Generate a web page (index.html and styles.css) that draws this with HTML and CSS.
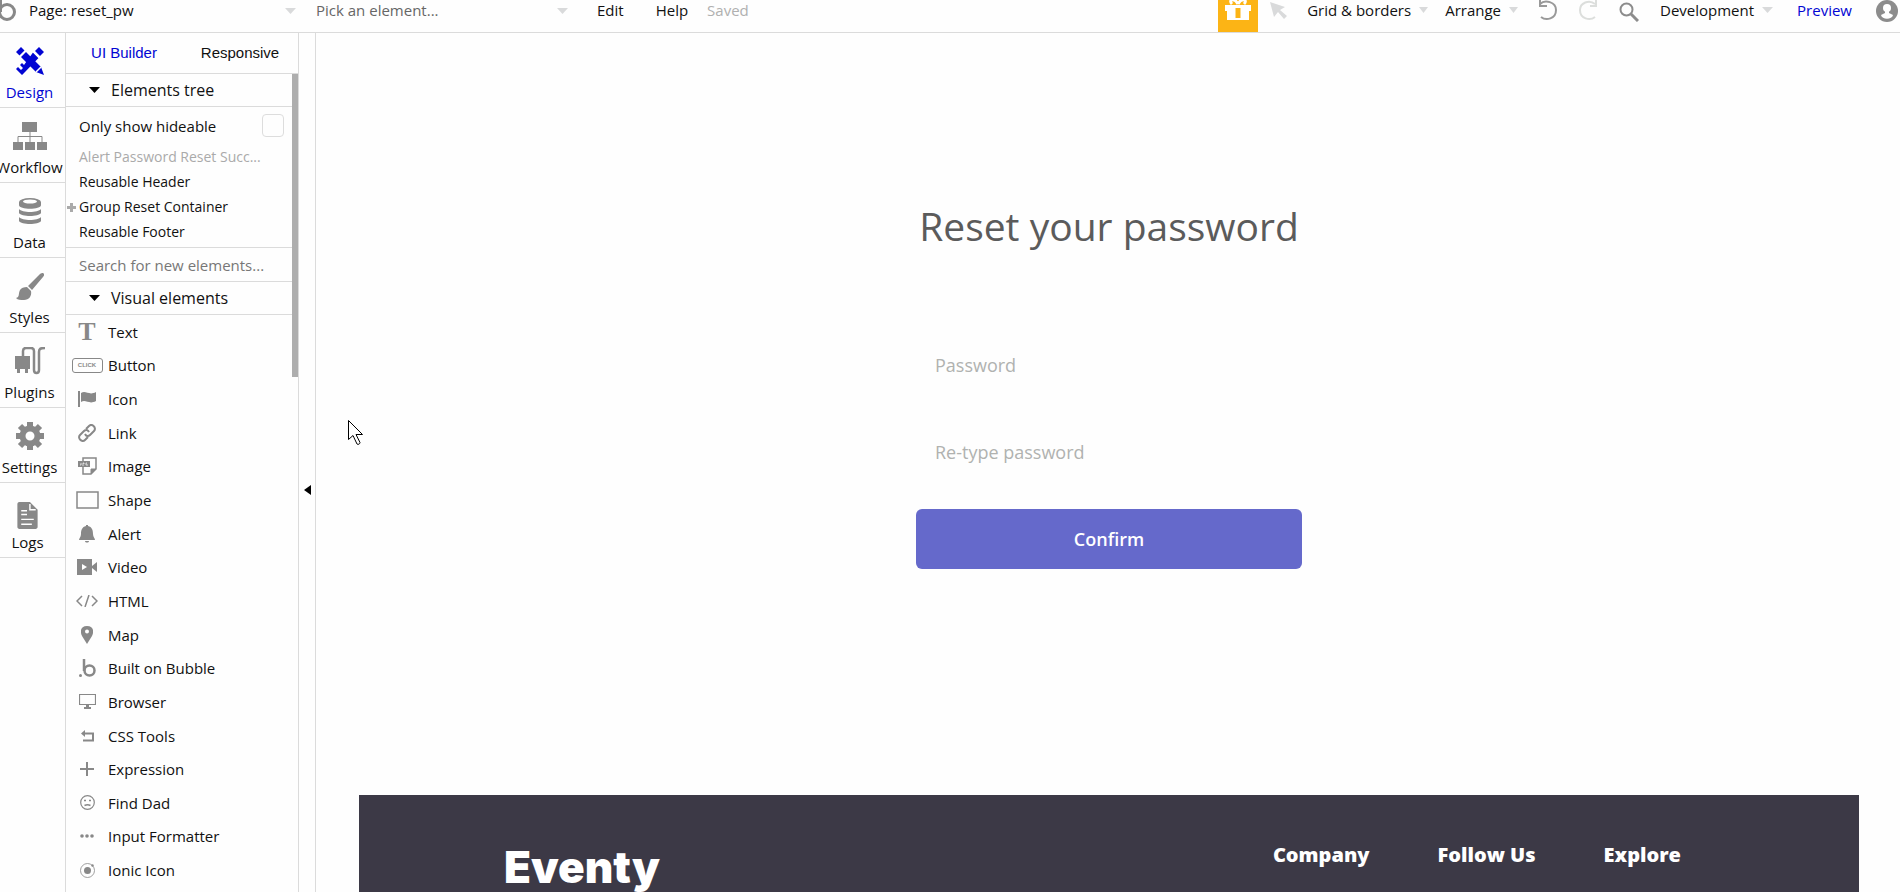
FILE: index.html
```html
<!DOCTYPE html>
<html lang="en">
<head>
    <meta charset="UTF-8">
    <meta name="viewport" content="width=device-width, initial-scale=1.0">
    <title>reset_pw - Editor</title>
    <link rel="stylesheet" href="styles.css">
</head>
<body>
    <header class="topbar">
        <svg class="logo" width="16" height="22" viewBox="0 0 16 22" fill="none" stroke="#888" stroke-width="3"><circle cx="7" cy="12" r="7.5"/><path d="M.5 0v12"/></svg>
        <div class="picker page-picker">
            <select aria-label="Page"><option>Page: reset_pw</option></select>
            <svg class="caret" width="11" height="6" viewBox="0 0 11 6"><path d="M0 0h11L5.500 6z" fill="#d9dadb"/></svg>
        </div>
        <div class="picker element-picker">
            <select aria-label="Element"><option>Pick an element...</option></select>
            <svg class="caret" width="11" height="6" viewBox="0 0 11 6"><path d="M0 0h11L5.500 6z" fill="#d9dadb"/></svg>
        </div>
        <nav class="menus">
            <button>Edit</button>
            <button>Help</button>
        </nav>
        <span class="saved">Saved</span>

        <div class="tools">
            <button class="gift" aria-label="Gift">
                <svg width="28" height="22" viewBox="0 0 28 22"><path d="M1 5h26v6H1zM3 11h22v9H3z" fill="#fff"/><path d="M11.500 8h5v10h-5z" fill="#fcb415"/><path d="M14 4C10-3 4 0 8 4M14 4c4-7 10-4 6 0" fill="none" stroke="#fff" stroke-width="3"/></svg>
            </button>
            <button aria-label="Select">
                <svg width="18" height="20" viewBox="0 0 18 20"><path d="M0 2l15 5-5 3 7 6-3 3-6-7-4 5z" fill="#d9dadb"/></svg>
            </button>
            <div class="menus-right">
                <button>Grid &amp; borders <svg class="caret" width="9" height="6" viewBox="0 0 9 6"><path d="M0 0h9L4.500 6z" fill="#d9dadb"/></svg></button>
                <button>Arrange <svg class="caret" width="9" height="6" viewBox="0 0 9 6"><path d="M0 0h9L4.500 6z" fill="#d9dadb"/></svg></button>
            </div>
            <div class="history">
                <button aria-label="Undo"><svg width="20" height="22" viewBox="0 0 20 22" fill="none" stroke="#999" stroke-width="2"><path d="M2 4c5-5 16-2 16 6 0 9-10 11-15 7M2 0v6h7"/></svg></button>
                <button aria-label="Redo"><svg width="19" height="22" viewBox="0 0 19 22" fill="none" stroke="#dcdedc" stroke-width="2"><path d="M16 4C10-1 1 3 1 10c0 9 10 11 15 7M17 0v6h-6"/></svg></button>
                <button aria-label="Search"><svg width="20" height="22" viewBox="0 0 20 22" fill="none" stroke="#8c8c8c"><circle cx="7.500" cy="9.500" r="6" stroke-width="2"/><path d="M12 14l7 7" stroke-width="3"/></svg></button>
            </div>
            <button class="version">Development <svg class="caret" width="11" height="6" viewBox="0 0 11 6"><path d="M0 0h11L5.500 6z" fill="#d9dadb"/></svg></button>
            <a class="preview" href="#">Preview</a>
            <button aria-label="Account">
                <svg width="22" height="22" viewBox="0 0 22 22"><circle cx="11" cy="11" r="11" fill="#8c8c8c"/><circle cx="11" cy="8" r="4" fill="#fff"/><path d="M9 10h4v3l4 2c-1 5-11 5-12 0l4-2z" fill="#fff"/></svg>
            </button>
        </div>
    </header>

    <div class="editor">
        <nav class="rail">
            <a class="active" href="#">
                <svg width="28" height="28" viewBox="0 0 28 28"><g fill="#0205d3"><path d="M0 5l5-5 4 4-5 5zM19 4l4-4 5 5-4 4zM5 10l5-5 15 15 3 8-8-3z"/><path d="M17 5.500l5.500 5.500L9 25l-3 3-6-6 2-2 3 3 2-2-3-3 2-2 2 2z"/></g><path d="M3 10l7-7M16.500 4l7.500 7.500M20 25l5-5" stroke="#fff" stroke-width="1.500"/></svg>
                Design
            </a>
            <a href="#">
                <svg width="34" height="28" viewBox="0 0 34 28" fill="#888"><path d="M9 0h15v10H9zM0 20h10v8H0zM12 20h10v8H12zM24 20h10v8H24z"/><path d="M17 10v10M5 20v-5.500h24V20" fill="none" stroke="#888"/></svg>
                Workflow
            </a>
            <a href="#">
                <svg width="22" height="28" viewBox="0 0 22 28" fill="#888"><path d="M0 5v3c0 5 22 5 22 0V5z"/><ellipse cx="11" cy="5" rx="11" ry="4"/><ellipse cx="11" cy="4.500" rx="7" ry="2" fill="#fff"/><path d="M0 12c3 4 19 4 22 0v4c-2 4-20 4-22 0zM0 20c3 4 19 4 22 0v4c-2 4-20 4-22 0z"/></svg>
                Data
            </a>
            <a href="#">
                <svg width="28" height="28" viewBox="0 0 28 28" fill="#888"><path d="M27 1c2 1 1 3 0 4L16 18l-4-4L24 2c1-1 2-1 3-1z"/><path d="M11 15l4 4c1 5-2 9-7 9-4 0-6 0-8-2 4-1 2-4 4-8 1-2 4-3 7-3z"/></svg>
                Styles
            </a>
            <a href="#">
                <svg width="30" height="28" viewBox="0 0 30 28"><path d="M0 9h15v13H0zM2 21h3v5H2zM10 21h3v5h-3z" fill="#888"/><path d="M8 9V4c0-2 1-3 3-3h5c2 0 3 1 3 3v19c0 4 5 4 5 0V5c0-3 1-4 6-4" fill="none" stroke="#888" stroke-width="2.500"/></svg>
                Plugins
            </a>
            <a href="#">
                <svg width="28" height="28" viewBox="0 0 28 28" fill="none" stroke="#888"><circle cx="14" cy="14" r="7.500" stroke-width="6"/><path d="M14 0v5M14 23v5M0 14h5M23 14h5M4 4l4 4M20 20l4 4M4 24l4-4M20 8l4-4" stroke-width="6"/></svg>
                Settings
            </a>
            <a class="logs" href="#">
                <svg width="21" height="27" viewBox="0 0 21 28"><path d="M2 0h11l8 8v18c0 1-1 2-2 2H2c-1 0-2-1-2-2V2c0-1 1-2 2-2z" fill="#888"/><path d="M13 2v6h6M4 13h6M4 18h13M4 23h11M4 9h6" fill="none" stroke="#fff" stroke-width="1.500"/></svg>
                Logs
            </a>
        </nav>

        <aside class="panel">
            <div class="tabs">
                <button class="active">UI Builder</button>
                <button>Responsive</button>
            </div>
            <div class="panel-body">
                <button class="section">
                    <svg width="11" height="6" viewBox="0 0 11 6"><path d="M0 0h11L5.500 6z"/></svg>
                    Elements tree
                </button>
                <div class="tree">
                    <div class="hideable">
                        <label for="hideable">Only show hideable</label>
                        <input type="checkbox" id="hideable">
                    </div>
                    <ul>
                        <li class="hidden">Alert Password Reset Succ...</li>
                        <li>Reusable Header</li>
                        <li><svg class="plus" width="9" height="9" viewBox="0 0 9 9"><path d="M0 4.500h9M4.500 0v9" stroke="#aaa" stroke-width="3"/></svg>Group Reset Container</li>
                        <li>Reusable Footer</li>
                    </ul>
                </div>
                <input class="search" type="text" placeholder="Search for new elements..." aria-label="Search for new elements">
                <button class="section">
                    <svg width="11" height="6" viewBox="0 0 11 6"><path d="M0 0h11L5.500 6z"/></svg>
                    Visual elements
                </button>
                <span class="scrollbar"></span>
            </div>
            <ul class="palette">
                <li><span class="icon icon-text">T</span>Text</li>
                <li><span class="icon"><span class="icon-button">CLICK</span></span>Button</li>
                <li><span class="icon"><svg width="18" height="16" viewBox="0 0 18 16" fill="#888"><path d="M0 0h2v16H0zM3 2c5-3 8 3 15-1v9c-7 4-10-2-15 1z"/></svg></span>Icon</li>
                <li><span class="icon"><svg width="18" height="18" viewBox="0 0 18 18" fill="none" stroke="#888" stroke-width="2"><path d="M8 5l3-3c3-3 8 2 5 5l-4 4c-2 2-4 1-5-1M10 13l-3 3c-3 3-8-2-5-5l4-4c2-2 4-1 5 1"/></svg></span>Link</li>
                <li><span class="icon"><svg width="19" height="18" viewBox="0 0 19 18" fill="none" stroke="#888"><path d="M5 4V1h13v11l-5 5H5v-7" stroke-width="1.500"/><path d="M13 17v-5h5z" fill="#888"/><path d="M0 4h12v6H0z" fill="#888" stroke="none"/><path d="M2 8h1V6M5 9V6h1v1M9 6H8v2h2" stroke="#fff" stroke-width=".7"/></svg></span>Image</li>
                <li><span class="icon"><svg width="23" height="18" viewBox="0 0 23 18"><path d="M1 1h21v16H1z" fill="none" stroke="#888" stroke-width="1.500"/></svg></span>Shape</li>
                <li><span class="icon"><svg width="16" height="18" viewBox="0 0 16 18" fill="#888"><path d="M7 0h2v1c4 1 5 4 5 8 0 3 2 4 2 6H0c0-2 2-3 2-6 0-4 1-7 5-8zM6 16h4c0 2-4 2-4 0z"/></svg></span>Alert</li>
                <li><span class="icon"><svg width="20" height="16" viewBox="0 0 20 16"><path d="M0 0h15v16H0zM15 7l5-4v10l-5-4z" fill="#888"/><path d="M5 5l5 3-5 3z" fill="#fff"/></svg></span>Video</li>
                <li><span class="icon"><svg width="22" height="12" viewBox="0 0 22 12" fill="none" stroke="#888" stroke-width="1.500"><path d="M6 1L1 6l5 5M16 1l5 5-5 5M13 0L9 12"/></svg></span>HTML</li>
                <li><span class="icon"><svg width="12" height="18" viewBox="0 0 12 18"><path d="M6 0c7 0 7 6 5 10l-5 8-5-8C-1 6-1 0 6 0z" fill="#888"/><circle cx="6" cy="5.500" r="2" fill="#fff"/></svg></span>Map</li>
                <li><span class="icon"><svg width="17" height="18" viewBox="0 0 17 18" fill="none" stroke="#888" stroke-width="2.500"><circle cx="10.500" cy="11.500" r="5"/><path d="M5 0v12"/><circle cx="1.500" cy="16.500" r="1.500" fill="#888" stroke="none"/></svg></span>Built on Bubble</li>
                <li><span class="icon"><svg width="17" height="15" viewBox="0 0 17 15"><path d="M.5.5h16v10H.5z" fill="none" stroke="#888" stroke-width="1.200"/><path d="M7 11h3v2h2v2H5v-2h2z" fill="#888"/></svg></span>Browser</li>
                <li><span class="icon"><svg width="13" height="12" viewBox="0 0 13 12"><path d="M3 3.500h9v7H2" fill="none" stroke="#888" stroke-width="2"/><path d="M0 3.500L4 0v7z" fill="#888"/></svg></span>CSS Tools</li>
                <li><span class="icon"><svg width="14" height="14" viewBox="0 0 14 14"><path d="M0 7h14M7 0v14" stroke="#888" stroke-width="2"/></svg></span>Expression</li>
                <li><span class="icon"><svg width="15" height="15" viewBox="0 0 15 15" fill="none" stroke="#888"><circle cx="7.500" cy="7.500" r="6.800" stroke-width="1.200"/><path d="M4 5.500h2M9 5.500h2M4.500 10.500c2-1 4-1 6 0" stroke-width="1.500"/></svg></span>Find Dad</li>
                <li><span class="icon"><svg width="14" height="4" viewBox="0 0 14 4" fill="#888"><circle cx="2" cy="2" r="1.800"/><circle cx="7" cy="2" r="1.800"/><circle cx="12" cy="2" r="1.800"/></svg></span>Input Formatter</li>
                <li><span class="icon"><svg width="15" height="15" viewBox="0 0 15 15"><circle cx="7.500" cy="7.500" r="7" fill="none" stroke="#888" stroke-width=".8"/><circle cx="7.500" cy="7.500" r="3.500" fill="#888"/><circle cx="12.500" cy="2.500" r="1.200" fill="#888"/></svg></span>Ionic Icon</li>
            </ul>
        </aside>

        <button class="collapse" aria-label="Collapse panel">
            <svg width="7" height="10" viewBox="0 0 7 10"><path d="M7 0v10L0 5z"/></svg>
        </button>

        <main class="canvas">
            <form class="reset">
                <h1>Reset your password</h1>
                <input type="password" placeholder="Password" aria-label="Password">
                <input type="password" placeholder="Re-type password" aria-label="Re-type password">
                <button type="button">Confirm</button>
            </form>
            <footer class="footer">
                <div class="brand">Eventy</div>
                <div class="footer-links">
                    <h2>Company</h2>
                    <h2>Follow Us</h2>
                    <h2>Explore</h2>
                </div>
            </footer>
            <svg class="pointer" width="16" height="26" viewBox="0 0 16 26"><path d="M.5.500v19l4.500-4 4 8.500c1 1 3 0 3-1.500l-4-8h6.500z" fill="#fff" stroke="#000"/></svg>
        </main>
    </div>
</body>
</html>
```

FILE: styles.css
```css
* { box-sizing: border-box; }
body { font-family: 'Open Sans', sans-serif; font-size: 15px; line-height: 20px; margin: 0; height: 100vh; display: flex; flex-direction: column; overflow: hidden; background-color: #fefefe; color: #111; }
button, select, input { font: inherit; color: inherit; background: none; border: none; margin: 0; padding: 0; }
button { cursor: pointer; }
a { color: inherit; text-decoration: none; }
ul { list-style: none; margin: 0; padding: 0; }
svg { display: block; flex: none; }

/* top bar */
.topbar { display: flex; align-items: flex-start; flex: none; height: 33px; border-bottom: 1px solid #dbdbdb; white-space: nowrap; }
.topbar button { display: flex; align-items: center; gap: 8px; }
.picker { position: relative; }
.picker select { appearance: none; width: 100%; height: 20px; }
.picker .caret { position: absolute; right: 0; top: 8px; }
.page-picker { width: 267px; margin-left: 13px; }
.element-picker { width: 252px; margin-left: 20px; color: #666; }
.menus { display: flex; gap: 32px; margin-left: 29px; }
.saved { margin-left: 19px; color: #b0b0b0; }
.tools { display: flex; align-items: flex-start; gap: 12px; margin-left: auto; padding-right: 2px; }
.tools .gift { width: 40px; height: 32px; background-color: #fcb415; justify-content: center; align-items: flex-start; }
.menus-right { display: flex; gap: 17px; margin-left: 7px; }
.history { display: flex; gap: 21px; margin: 0 9px 0 8px; }
.preview { margin: 0 12px; color: #0205d3; }

.editor { display: flex; flex: 1; min-height: 0; }

/* left navigation */
.rail { width: 66px; flex: none; border-right: 1px solid #dbdbdb; }
.rail a { display: flex; flex-direction: column; align-items: center; gap: 7px; height: 75px; padding: 14px 6px 0 0; border-bottom: 1px solid #dbdbdb; }
.rail .active { color: #0205d3; }
.rail .logs { gap: 3px; padding: 19px 10px 0 0; }

/* elements panel */
.panel { display: flex; flex-direction: column; width: 233px; flex: none; border-right: 1px solid #dbdbdb; }
.tabs { display: flex; height: 41px; border-bottom: 1px solid #dbdbdb; font-family: 'Liberation Sans', sans-serif; }
.tabs button { flex: 1; }
.tabs .active { color: #0205d3; }
.panel-body { position: relative; }
.section { display: flex; align-items: center; gap: 11px; width: 100%; height: 33px; padding-left: 23px; border-bottom: 1px solid #dbdbdb; font-size: 16px; }
.tree { padding: 7px 14px 3px 13px; border-bottom: 1px solid #dbdbdb; }
.hideable { display: flex; align-items: center; justify-content: space-between; height: 23px; margin-bottom: 7px; }
.hideable input { appearance: none; width: 22px; height: 23px; border: 1px solid #ddd; border-radius: 4px; }
.tree li { position: relative; height: 25px; line-height: 25px; font-size: 14px; white-space: nowrap; }
.tree .hidden { color: #aaa; }
.plus { position: absolute; left: -12px; top: 9px; }
.search { display: block; width: 100%; height: 34px; padding-left: 13px; border-bottom: 1px solid #dbdbdb; }
.search::placeholder { color: #777; }
.scrollbar { position: absolute; right: 0; top: 0; width: 6px; height: 303px; background-color: #aeaeae; }
.palette { display: flex; flex-direction: column; flex: 1; padding-bottom: 5px; }
.palette li { display: flex; align-items: center; flex: 1; }
.icon { display: flex; justify-content: center; width: 42px; }
.icon-text { color: #888; font: bold 26px/28px 'Liberation Serif', serif; }
.icon-button { width: 31px; border: 1px solid #888; border-radius: 3px; color: #888; font: bold 6px/13px 'Liberation Sans', sans-serif; text-align: center; }
.collapse { width: 17px; flex: none; padding: 54px 0 0 5px; border-right: 1px solid #dbdbdb; }

/* page being edited */
.canvas { position: relative; flex: 1; padding: 166px 41px 0 43px; overflow: hidden; }
.reset { display: flex; flex-direction: column; gap: 27px; width: 386px; margin: 0 auto 226px; font-size: 18px; }
.reset h1 { margin: 0 0 55px; font-size: 39px; font-weight: 400; line-height: 54px; text-align: center; white-space: nowrap; color: #5b5b5b; }
.reset input { height: 60px; padding: 0 19px; }
.reset input::placeholder { color: #b0b2b0; }
.reset button { height: 60px; border-radius: 6px; background-color: #6569cb; color: #fff; font-weight: 600; }
.footer { display: flex; justify-content: space-between; height: 300px; padding: 45px 178px 0 145px; background-color: #3c3946; color: #fff; }
.brand { font: 900 44px/54px Inter, sans-serif; }
.footer-links { display: flex; gap: 68px; }
.footer h2 { margin: 0; font-size: 20px; font-weight: 800; line-height: 30px; }
.pointer { position: absolute; left: 32px; top: 387px; }
```
